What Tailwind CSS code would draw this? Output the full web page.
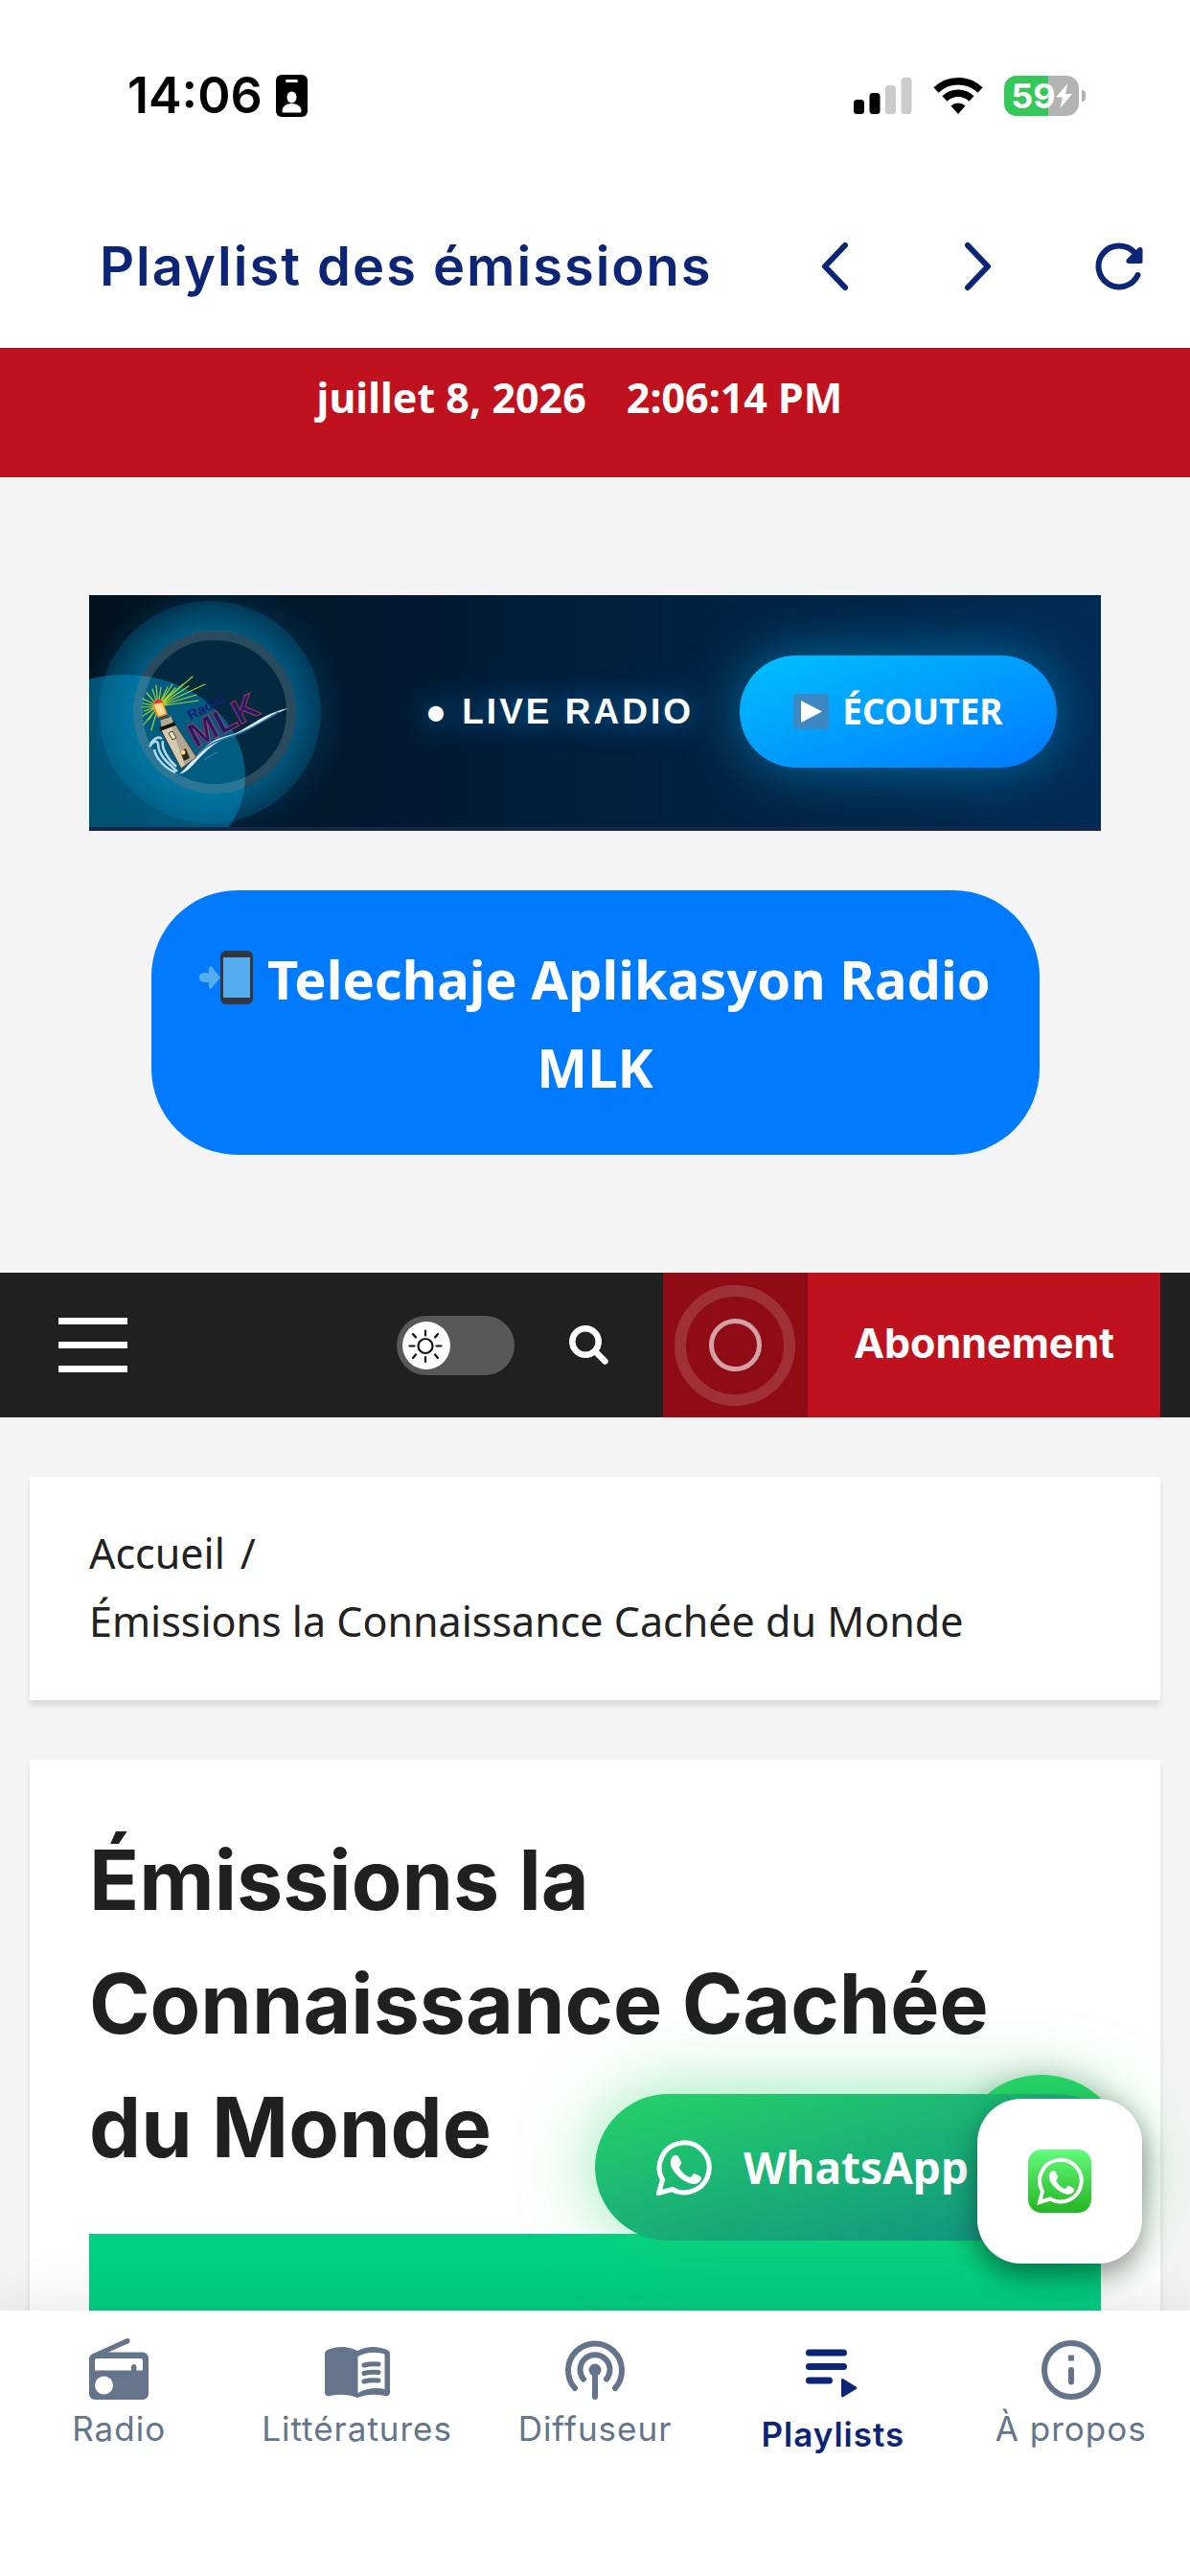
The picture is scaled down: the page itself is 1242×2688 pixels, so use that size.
<!DOCTYPE html>
<html lang="fr">
<head>
    <meta charset="UTF-8">
    <meta name="viewport" content="width=device-width, initial-scale=1.0">
    <title>Playlist des émissions</title>
    <script src="https://cdn.jsdelivr.net/npm/@tailwindcss/browser@4"></script>
</head>
<body class="h-screen flex flex-col overflow-hidden bg-white font-['Noto_Sans',sans-serif]">

    <!-- Status bar + title -->
    <header class="shrink-0 pb-[7px] font-['Inter',sans-serif]">
        <div class="h-[200px] flex items-center justify-between pl-[133px] pr-[109px]">
            <div class="flex items-center gap-[14px] text-black">
                <span class="text-[52px] leading-none font-semibold">14:06</span>
                <svg class="w-[33px] h-[44px]" viewBox="0 0 33 44">
                    <rect width="33" height="44" rx="6" fill="#000"/>
                    <rect x="10" y="5" width="13" height="3" rx="1.500" fill="#fff"/>
                    <ellipse cx="16.500" cy="23.500" rx="5" ry="6" fill="#fff"/>
                    <path d="M6.500 38c0-5 4.500-8 10-8s10 3 10 8c0 1-.5 1.500-1.500 1.500H8c-1 0-1.500-.5-1.500-1.500z" fill="#fff"/>
                </svg>
            </div>
            <div class="flex items-center gap-[22px]">
                <svg class="w-[61px] h-[40px]" viewBox="0 0 61 40">
                    <rect x="0" y="24" width="11" height="15" rx="3.500"/>
                    <rect x="16.500" y="17" width="11" height="22" rx="3.500"/>
                    <rect x="33" y="9" width="11" height="30" rx="3.500" fill="#ccc"/>
                    <rect x="49.500" y="1" width="11" height="38" rx="3.500" fill="#ccc"/>
                </svg>
                <svg class="w-[52px] h-[40px]" viewBox="0 0 52 40">
                    <path d="M26 39l-7.500-8.500a11 11 0 0 1 15 0z"/>
                    <path d="M12 23a20 20 0 0 1 28 0M3 14a33 33 0 0 1 46 0" fill="none" stroke="#000" stroke-width="7.500"/>
                </svg>
                <div class="flex items-center gap-[3px]">
                    <div class="w-[78px] h-[42px] rounded-[13px] bg-linear-to-r from-[#34c759] from-59% to-[#b3b3b3] to-59% flex items-center justify-center text-white">
                        <span class="text-[36px] leading-none font-bold">59</span>
                        <svg class="w-[17px] h-[26px]" viewBox="0 0 17 26"><path d="M12.500 0L0 14.500h7L4.500 26 17 11h-7z" fill="#fff"/></svg>
                    </div>
                    <div class="w-1 h-3 rounded-r-full bg-[#b3b3b3]"></div>
                </div>
            </div>
        </div>
        <div class="h-[156px] flex items-center pl-[104px] pr-[49px] text-[#0c2577]">
            <h1 class="flex-1 text-[56px] leading-none font-semibold tracking-[2px] whitespace-nowrap">Playlist des émissions</h1>
            <div class="flex items-center gap-[122px]">
                <button aria-label="Précédent">
                    <svg class="w-[28px] h-[52px]" viewBox="0 0 28 52" fill="none" stroke="currentColor" stroke-width="6" stroke-linecap="round" stroke-linejoin="round"><path d="M25 4L4 26l21 22"/></svg>
                </button>
                <button aria-label="Suivant">
                    <svg class="w-[28px] h-[52px]" viewBox="0 0 28 52" fill="none" stroke="currentColor" stroke-width="6" stroke-linecap="round" stroke-linejoin="round"><path d="M3 4l21 22L3 48"/></svg>
                </button>
                <button aria-label="Actualiser" class="-ml-[14px]">
                    <svg class="w-[50px] h-[52px]" viewBox="0 0 50 52">
                        <path d="M44.500 35A21.500 21.500 0 1 1 41 11.500" fill="none" stroke="currentColor" stroke-width="6" stroke-linecap="round"/>
                        <path d="M44.800 6.800c1.500-1.500 4.700-1 4.700 1.500V21c0 1.200-.8 2-2 2H35c-2.500 0-3.300-3-1.700-4.700z" fill="currentColor"/>
                    </svg>
                </button>
            </div>
        </div>
    </header>

    <!-- Web page -->
    <main class="relative flex-1 min-h-0 overflow-hidden bg-[#f4f4f4]">
        <div class="h-[135px] pt-[18px] pr-8 bg-[#c0121e] flex justify-center gap-[42px] text-white text-[43px] leading-[68px] font-bold">
            <span>juillet 8, 2026</span>
            <span>2:06:14 PM</span>
        </div>

        <section class="px-[93px] py-[123px] flex flex-col items-center gap-[62px]">
            <!-- Live banner -->
            <div class="relative w-full h-[246px] overflow-hidden border-b-4 border-[#14294a] bg-linear-to-r from-[#001220] via-[#021c36] via-40% to-[#002b55] flex items-center justify-end pr-[46px] gap-[48px]">
                <svg class="absolute left-0 top-0 w-[340px] h-[246px]" viewBox="0 0 340 246">
                    <defs>
                        <radialGradient id="halo">
                            <stop offset="0.68" stop-color="#0088bb" stop-opacity=".5"/>
                            <stop offset="1" stop-color="#0088bb" stop-opacity=".22"/>
                        </radialGradient>
                        <radialGradient id="fade">
                            <stop offset="0.6" stop-color="#0099dd" stop-opacity=".2"/>
                            <stop offset="1" stop-color="#0099dd" stop-opacity="0"/>
                        </radialGradient>
                    </defs>
                    <circle cx="131" cy="122" r="140" fill="url(#fade)"/>
                    <circle cx="126" cy="122" r="116" fill="url(#halo)"/>
                    <circle cx="131" cy="122" r="85" fill="#02293f"/>
                    <ellipse cx="37" cy="189" rx="126" ry="106" fill="#0090c4" fill-opacity=".5"/>
                    <circle cx="131" cy="122" r="80" fill="none" stroke="#fff" stroke-opacity=".16" stroke-width="10"/>
                    <!-- beam -->
                    <g stroke="#a6d52c" stroke-width="1.200" stroke-linecap="round">
                        <path d="M72 116L108 85M72 116L121 93M72 116L98 93M72 116L112 104M72 116L90 97M72 116L114 110M72 116L82 96M72 116L75 96M72 116L66 98M72 116L60 102M72 116L56 108M72 116L55 117M72 116L56 126M72 116L57 135M72 116L65 141M72 116L62 130M72 116L104 95M72 116L87 93M72 116L70 94M72 116L56 113M72 116L57 121"/>
                    </g>
                    <!-- waves -->
                    <path d="M94 187c10-8 20-26 36-35 9-5 18-5 27-10 18-10 30-20 51-24-18 8-22 12-34 18-11 5-20 9-30 13-14 5-22 14-30 22-6 7-12 14-20 16z" fill="#dcebf5"/>
                    <path d="M64 155c6-8 10-7 12-5M63 158c5-7 8-6 9-3 0 12 10 20 20 29M68 161c2 10 12 20 22 24M77 152c-2 8 6 20 14 27" fill="none" stroke="#b5d8ea" stroke-width="2.500"/>
                    <path d="M112 168c14-16 30-18 46-24 14-6 26-14 40-22M120 172c4-2 8-6 14-8" fill="none" stroke="#2c6fa8" stroke-width="1.500"/>
                    <!-- tower -->
                    <path d="M75 141l15-6 22 34-16 12z" fill="#d3c9b2" stroke="#3a352c" stroke-width="1"/>
                    <path d="M100 178l12-9-22-34-4 2z" fill="#8d8370" fill-opacity=".5"/>
                    <path d="M74 129l11-4 4 11-13 4z" fill="#b4a993"/>
                    <path d="M74 140l16-6" stroke="#15130f" stroke-width="4"/>
                    <path d="M73 130l12-4" stroke="#4a443a" stroke-width="2"/>
                    <path d="M83 144l4-2 4 7-4 2z" fill="#f3e6c0" stroke="#443a20" stroke-width="1"/>
                    <path d="M95 163l6-3 4 10-6 3z" fill="#2b2a26"/>
                    <circle cx="98" cy="164" r="2.500" fill="#ffd76a"/>
                    <path d="M67 115c0-6 8-8 10-2l4 11-9 3z" fill="#ffd98a" stroke="#f08a30" stroke-width="1.500"/>
                    <path d="M67 114c1-6 8-7 10-2z" fill="#e0402a"/>
                    <g font-family="Liberation Sans, sans-serif" font-weight="700" fill="#14206e">
                        <text x="106" y="131" font-size="15" transform="rotate(-28 106 131)">Radio</text>
                        <text x="111" y="160" font-size="36" stroke="#b8304e" stroke-width="1" transform="rotate(-28 111 160)">MLK</text>
                    </g>
                </svg>
                <p class="relative font-['Liberation_Sans',sans-serif] text-[37px] leading-none font-bold tracking-[3px] text-white [text-shadow:0_0_30px_#0088dd]">● LIVE RADIO</p>
                <button class="relative w-[331px] h-[117px] rounded-full bg-linear-to-br from-[#00c0ff] to-[#0077ff] shadow-[0_0_60px_rgba(0,160,220,0.6)] flex items-center justify-center gap-[14px] text-white text-[37px] font-bold">
                    <svg class="w-[37px] h-[37px]" viewBox="0 0 37 37"><rect width="37" height="37" rx="4" fill="#3b88c3"/><path d="M8 7l22 11.500L8 30z" fill="#fff"/></svg>
                    ÉCOUTER
                </button>
            </div>

            <a href="#" class="w-[927px] max-w-full rounded-[90px] bg-[#007bff] p-[46px] text-center text-white text-[56px] leading-[92px] font-bold">
                <svg class="inline-block align-[-5px] w-[56px] h-[56px]" viewBox="0 0 56 56">
                    <rect x="22" y="0" width="34" height="56" rx="6" fill="#31373d"/>
                    <rect x="25" y="7" width="28" height="42" fill="#55acee"/>
                    <path d="M22 28L13 39c-2 2-3 0-3-2v-4H5c-7 0-7-10 0-10h5v-4c0-3 2-4 4-1z" fill="#55acee"/>
                </svg>
                Telechaje Aplikasyon Radio MLK
            </a>
        </section>

        <!-- Site menu -->
        <nav class="h-[151px] bg-[#202020] flex items-center justify-end pl-[61px] pr-[31px]">
            <button aria-label="Menu" class="w-[72px] mr-auto flex flex-col gap-[18px]">
                <span class="block h-[7px] w-full bg-white"></span>
                <span class="block h-[7px] w-full bg-white"></span>
                <span class="block h-[7px] w-full bg-white"></span>
            </button>
            <label class="relative flex items-center mr-[57px]">
                <input type="checkbox" aria-label="Mode sombre" class="appearance-none w-[123px] h-[62px] rounded-full bg-[#585858]">
                <svg class="absolute left-[6px] w-[50px] h-[50px]" viewBox="0 0 50 50" fill="none" stroke="#111" stroke-width="2.200" stroke-linecap="round">
                    <circle cx="25" cy="25" r="25" fill="#fff" stroke="none"/>
                    <circle cx="24" cy="25.500" r="7.500"/>
                    <path d="M24 9.500v5M24 37v5M7.500 25.500h5M35.500 25.500h5M11 13l3 3.500M37 13l-3 3.500M11 38l3-3.500M37 38l-3-3.500"/>
                </svg>
            </label>
            <button aria-label="Rechercher" class="mr-[57px]">
                <svg class="w-[41px] h-[41px]" viewBox="0 0 41 41" fill="none" stroke="#fff" stroke-width="6.500" stroke-linecap="round"><circle cx="17" cy="17" r="13.700"/><path d="M27.500 27.500L37.500 37.500"/></svg>
            </button>
            <a href="#" class="h-full flex font-['Inter',sans-serif]">
                <span class="w-[151px] bg-[#8f0c16] flex items-center justify-center">
                    <span class="w-[126px] h-[126px] rounded-full border-12 border-white/15 flex items-center justify-center">
                        <span class="w-[55px] h-[55px] rounded-full border-5 border-white/62"></span>
                    </span>
                </span>
                <span class="px-12 bg-[#c0121e] flex items-center pb-1 text-white text-[43px] font-bold">Abonnement</span>
            </a>
        </nav>

        <div class="px-[31px] py-[62px] flex flex-col gap-[62px]">
            <div class="bg-white px-[62px] pt-11 pb-[47px] shadow-[0_6px_6px_rgba(0,0,0,0.1)] text-[#222] text-[43px] leading-[71px]">
                <a href="#">Accueil</a><span class="ml-4">/</span>
                <p>Émissions la Connaissance Cachée du Monde</p>
            </div>

            <article class="bg-white px-[62px] pt-[62px] shadow-[0_6px_6px_rgba(0,0,0,0.1)]">
                <h2 class="font-['Inter',sans-serif] text-[86px] leading-[129px] font-bold text-[#202020]">Émissions la Connaissance Cachée du Monde</h2>
                <div class="mt-[46px] h-[400px] bg-[#00d084]"></div>
            </article>
        </div>

        <!-- Floating WhatsApp buttons -->
        <div class="absolute right-[65px] bottom-[66px] w-[180px] h-[180px] rounded-full bg-[#25d366] shadow-[0_6px_36px_rgba(0,0,0,0.35)]"></div>
        <button class="absolute right-[63px] bottom-[73px] w-[558px] h-[153px] rounded-full bg-linear-to-br from-[#25d366] to-[#128c7e] shadow-[0_0_75px_rgba(37,211,102,0.5)] flex items-center gap-[33px] pl-16 text-white text-[46px] font-bold">
            <svg class="w-[58px] h-[58px]" viewBox="0 0 58 58">
                <path d="M2.500 55.500l4-14A26 26 0 1 1 16.500 51.500z" fill="none" stroke="#fff" stroke-width="5"/>
                <path d="M16 19c2-4 5-4 7-2l3 6c1 2-2 4-2 6 3 5 6 8 11 10 2 0 3-4 5-4l6 3c3 3-2 8-6 8-11 0-23-12-25-20-.5-3 0-5 1-7z" fill="#fff"/>
            </svg>
            WhatsApp
        </button>
        <button aria-label="WhatsApp" class="absolute right-[50px] bottom-[49px] w-[172px] h-[172px] rounded-[46px] bg-white shadow-[0_12px_30px_rgba(0,0,0,0.4)] flex items-center justify-center">
            <svg class="w-[66px] h-[66px]" viewBox="0 0 66 66">
                <defs><linearGradient id="wa" x2="0" y2="1"><stop stop-color="#62fb7c"/><stop offset="1" stop-color="#25b422"/></linearGradient></defs>
                <rect width="66" height="66" rx="14" fill="url(#wa)"/>
                <path d="M12 55l3-11.500A21.800 21.800 0 1 1 23 51.500z" fill="none" stroke="#fff" stroke-width="4"/>
                <path d="M22.500 25c2-3.500 4-3.500 6-2l2.500 5c.8 1.700-1.700 3.300-1.700 5 2.500 4 5 6.500 9 8 1.700 0 2.500-3.300 4.200-3.300l5 2.500c2.500 2.500-1.700 6.500-5 6.500-9 0-19-10-20.500-16.500-.4-2.500 0-4 .5-5.200z" fill="#fff"/>
            </svg>
        </button>
    </main>

    <!-- Bottom tabs -->
    <nav class="relative shrink-0 h-[277px] pt-7 bg-white shadow-[0_0_60px_rgba(0,0,0,0.12)] grid grid-cols-5 items-start font-['Inter',sans-serif] text-[35px] leading-[42px] tracking-[1px] text-[#64748b]">
        <a href="#" class="flex flex-col items-center gap-[6px]">
            <svg class="w-[68px] h-[68px]" viewBox="0 0 68 68">
                <path d="M3 24c0-4 1-5.500 4-7L42 1.200c3.500-1.200 5 3.300 2 5L23 15.500h36a6 6 0 0 1 6 6V59a6 6 0 0 1-6 6H9a6 6 0 0 1-6-6z" fill="currentColor"/>
                <path d="M9 34.500V24a2 2 0 0 1 2-2h46a2 2 0 0 1 2 2v10.500h-6.500V31c0-4-5.500-4-5.500 0v3.500z" fill="#fff"/>
                <circle cx="18.500" cy="50" r="9.500" fill="#fff"/>
            </svg>
            Radio
        </a>
        <a href="#" class="flex flex-col items-center gap-[6px]">
            <svg class="w-[68px] h-[68px]" viewBox="0 0 68 68">
                <path d="M0 18c0-3 1-4 3-5 10-4 21-4 31 1 10-5 21-5 31-1 2 1 3 2 3 5v39c0 3-2 5-5 4-10-2-19-2-29 2-10-4-19-4-29-2-3 1-5-1-5-4z" fill="currentColor"/>
                <path d="M34.500 20c9-5 18-5 26.500-3 1 .3 1.500 1 1.500 2v35c-9-2-19-1-28 4z" fill="#fff"/>
                <path d="M41 29c5-1.500 11-1.500 15-1M41 37.500c5-1.500 11-1.500 15-1M41 46c5-1.500 11-1.500 15-1" fill="none" stroke="currentColor" stroke-width="5" stroke-linecap="round"/>
            </svg>
            Littératures
        </a>
        <a href="#" class="flex flex-col items-center gap-[6px]">
            <svg class="w-[68px] h-[68px]" viewBox="0 0 68 68" fill="none" stroke="currentColor" stroke-width="6" stroke-linecap="round">
                <path d="M13 53a28 28 0 1 1 42 0M22 43.500a15.500 15.500 0 1 1 24 0M34 35v27"/>
                <circle cx="34" cy="34" r="6.500" fill="currentColor" stroke="none"/>
            </svg>
            Diffuseur
        </a>
        <a href="#" class="flex flex-col items-center gap-3 font-semibold text-[#0c2577]">
            <svg class="w-[68px] h-[68px]" viewBox="0 0 68 68" fill="none" stroke="currentColor" stroke-width="7" stroke-linecap="round">
                <path d="M9.500 16h36M9.500 30.500h36M9.500 45h21"/>
                <path d="M43 44.500c0-1.500 1.500-2 2.500-1l13 8c1 .7 1 1.800 0 2.500l-13 8c-1 .8-2.500.3-2.500-1z" fill="currentColor" stroke="none"/>
            </svg>
            Playlists
        </a>
        <a href="#" class="flex flex-col items-center gap-[6px]">
            <svg class="w-[68px] h-[68px]" viewBox="0 0 68 68" fill="none" stroke="currentColor" stroke-width="6">
                <circle cx="34" cy="34" r="28"/>
                <path d="M34 34v12.500" stroke-linecap="round"/>
                <path d="M34 18.500v6"/>
            </svg>
            À propos
        </a>
    </nav>
</body>
</html>
